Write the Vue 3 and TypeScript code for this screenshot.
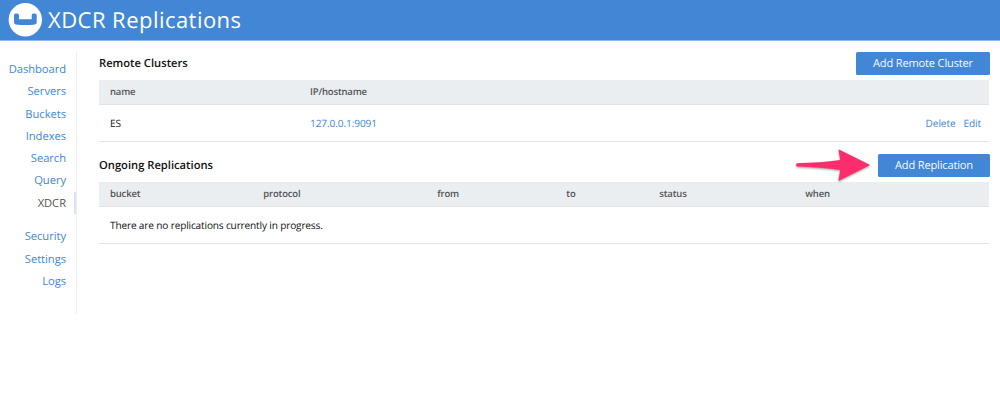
<script setup lang="ts">
interface NavItem {
  label: string
  active?: boolean
}

const primaryNav: NavItem[] = [
  { label: 'Dashboard' },
  { label: 'Servers' },
  { label: 'Buckets' },
  { label: 'Indexes' },
  { label: 'Search' },
  { label: 'Query' },
  { label: 'XDCR', active: true },
]
const secondaryNav: NavItem[] = [{ label: 'Security' }, { label: 'Settings' }, { label: 'Logs' }]
const columns: string[] = ['bucket', 'protocol', 'from', 'to', 'status', 'when']
</script>

<template>
  <div class="page">
    <header class="topbar">
      <svg class="logo" width="34" height="34" viewBox="0 0 34 34" aria-hidden="true">
        <circle cx="17.3" cy="16.7" r="16.7" fill="#fff" />
        <path
          d="M6 12.3Q6 10.5 7.8 10.5H9.2Q11 10.5 11 12.3V16.2H23.7V12.3Q23.7 10.5 25.5 10.5H26.9Q28.7 10.5 28.7 12.3V19.6Q28.7 21.3 27 21.5Q17.3 22.5 7.7 21.5Q6 21.3 6 19.6Z"
          fill="#4287d6"
        />
      </svg>
      <h1 class="title">XDCR Replications</h1>
    </header>

    <div class="body">
      <nav class="sidebar">
        <a v-for="item in primaryNav" :key="item.label" class="nav-item" :class="{ active: item.active }">{{ item.label }}</a>
        <div class="nav-gap"></div>
        <a v-for="item in secondaryNav" :key="item.label" class="nav-item">{{ item.label }}</a>
      </nav>

      <main class="content">
        <section class="panel">
          <div class="panel-head">
            <h2>Remote Clusters</h2>
            <button class="btn wide">Add Remote Cluster</button>
          </div>
          <div class="row head clusters"><span>name</span><span>IP/hostname</span></div>
          <div class="row data clusters">
            <span>ES</span>
            <a class="link">127.0.0.1:9091</a>
            <div class="actions"><a class="link">Delete</a><a class="link">Edit</a></div>
          </div>
        </section>

        <section class="panel">
          <div class="panel-head">
            <h2>Ongoing Replications</h2>
            <div class="callout">
              <svg class="arrow" width="78" height="38" viewBox="0 0 78 38" aria-hidden="true">
                <path
                  d="M1.2 15.3Q25 14.7 44.2 12L42.6 2.4Q42.4 1.2 43.5 1.8L73.2 16.6Q74 17.1 73.2 17.6L43.5 32.6Q42.3 33.2 42.5 32L44.2 22Q25 19.4 1.2 18.6Q0.2 18.5 0.2 17Q0.2 15.4 1.2 15.3Z"
                  fill="#ff2d6b"
                />
              </svg>
              <button class="btn">Add Replication</button>
            </div>
          </div>
          <div class="row head replications">
            <span v-for="column in columns" :key="column">{{ column }}</span>
          </div>
          <div class="row data"><span class="message">There are no replications currently in progress.</span></div>
        </section>
      </main>
    </div>
  </div>
</template>

<style>
body {
  margin: 0;
  background: #fff;
}
</style>

<style scoped>
.page {
  height: 411px;
  overflow: hidden;
  font-family: 'Open Sans', 'Noto Sans', sans-serif;
  text-rendering: geometricPrecision;
  color: #1c1c1c;
}
.topbar {
  display: flex;
  align-items: center;
  box-sizing: border-box;
  height: 41px;
  padding: 0 0 1px 8px;
  background: #4287d6;
  border-bottom: 1px solid #8db7e7;
}
.logo {
  flex: none;
}
.title {
  margin: 0 0 0 6px;
  font-size: 22px;
  line-height: 40px;
  font-weight: 400;
  letter-spacing: 0.46px;
  color: #fff;
  white-space: nowrap;
}
.body {
  display: flex;
}
.sidebar {
  box-sizing: border-box;
  width: 77px;
  height: 262px;
  margin-top: 11px;
  padding-top: 6px;
  border-right: 1px solid #eeeeee;
}
.nav-item {
  display: block;
  box-sizing: border-box;
  height: 22.3px;
  padding-right: 10px;
  font-size: 11.2px;
  line-height: 23px;
  letter-spacing: -0.04px;
  text-align: right;
  color: #4287d6;
}
.nav-item.active {
  padding-right: 8px;
  border-right: 2px solid #d5e4f7;
  color: #555;
}
.nav-gap {
  height: 11.4px;
}
.content {
  flex: 1;
  padding: 11px 10px 0 22px;
}
.panel {
  height: 102px;
}
.panel-head {
  display: flex;
  align-items: center;
  justify-content: space-between;
  height: 22px;
  margin-bottom: 6px;
}
h2 {
  margin: 0;
  font-size: 11.2px;
  line-height: 23px;
  font-weight: 600;
  color: #111;
}
.callout {
  display: flex;
  align-items: center;
}
.arrow {
  flex: none;
  margin: 3px 4px 0 0;
  filter: drop-shadow(0 1.5px 1px rgba(0, 0, 0, 0.4));
}
.btn {
  width: 112px;
  height: 23px;
  padding: 0;
  border: 0;
  border-radius: 1.5px;
  background: #4287d6;
  color: #f4f8fd;
  font: 400 11.1px/23px 'Open Sans', 'Noto Sans', sans-serif;
  letter-spacing: -0.18px;
  text-rendering: geometricPrecision;
}
.btn.wide {
  width: 134px;
}
.row {
  display: flex;
  align-items: center;
  box-sizing: border-box;
  margin-right: 1px;
  padding: 0 8px 0 11px;
  white-space: nowrap;
}
.head {
  height: 25px;
  padding-bottom: 1px;
  background: #eaeef1;
  border-bottom: 1px solid #e0e2e4;
  font-size: 9.5px;
  font-weight: 600;
  letter-spacing: -0.17px;
  color: #555;
}
.data {
  height: 37px;
  border-bottom: 1px solid #e6e6e6;
  font-size: 10.1px;
  letter-spacing: -0.1px;
  color: #111;
}
.message {
  letter-spacing: -0.16px;
}
.clusters {
  display: grid;
  grid-template-columns: 200px 1fr auto;
}
.replications {
  display: grid;
  grid-template-columns: 153.3px 174px 129px 93px 146px 1fr;
}
.link {
  color: #4287d6;
}
.actions {
  display: flex;
  gap: 8px;
}
</style>
